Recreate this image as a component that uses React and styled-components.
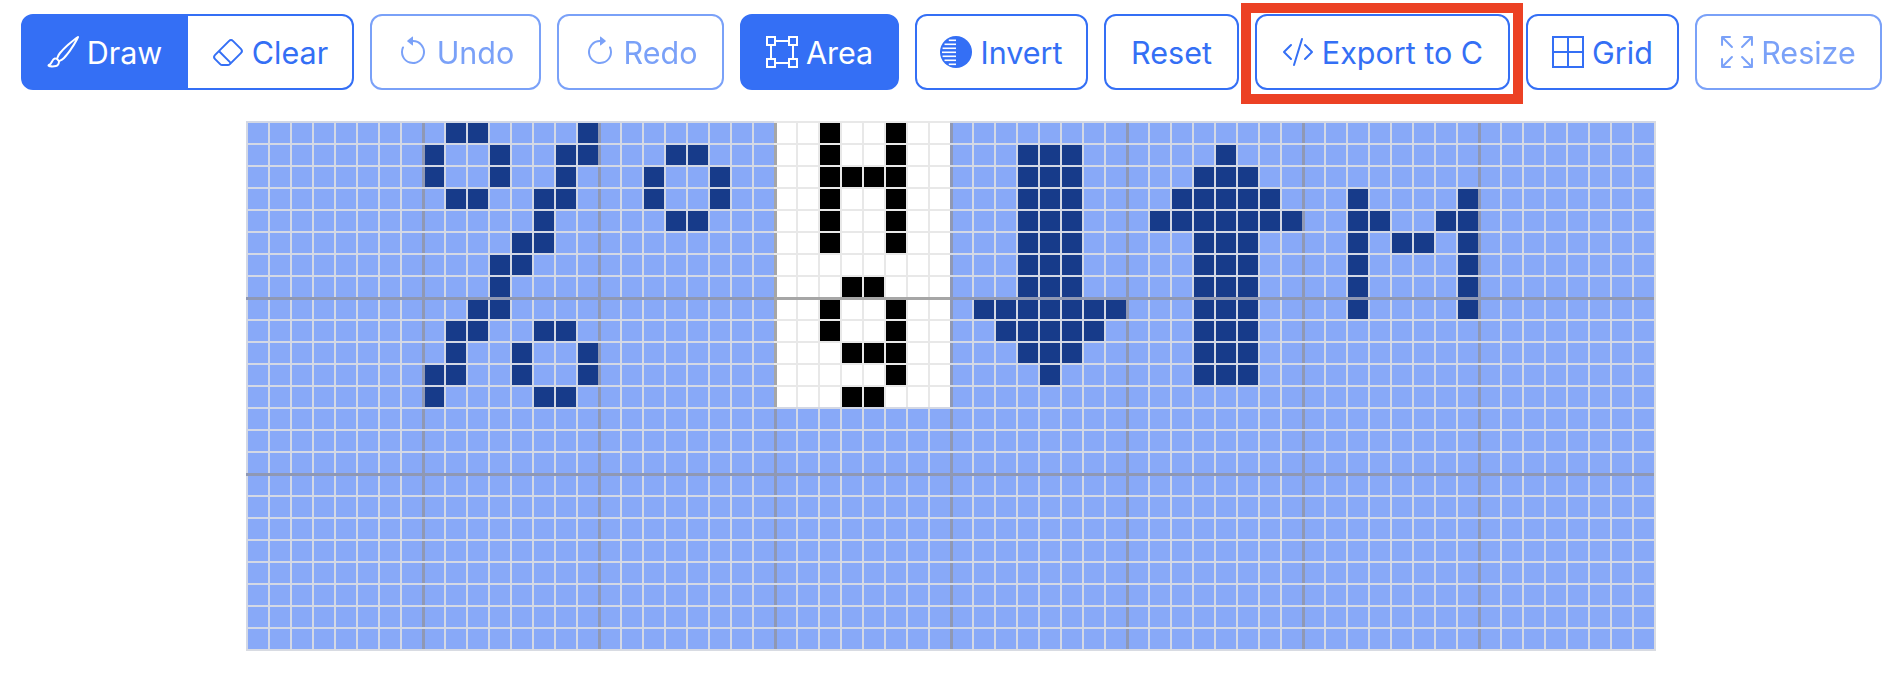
import React from 'react'
import styled, { createGlobalStyle } from 'styled-components'
import {
  BsBrush,
  BsEraser,
  BsArrowCounterclockwise,
  BsArrowClockwise,
  BsBoundingBox,
  BsCodeSlash,
  BsBorderAll,
  BsArrowsFullscreen,
} from 'react-icons/bs'

const GlobalStyle = createGlobalStyle`
  html, body { margin: 0; background: #ffffff; }
  body { font-family: Inter, "Liberation Sans", sans-serif; overflow-x: hidden; }
`

const Page = styled.div`
  display: flex;
  flex-direction: column;
  padding-top: 14px;
`

const Toolbar = styled.div`
  display: flex;
  gap: 16px;
  padding-left: 21px;
  margin-bottom: 31px;
`

const ButtonGroup = styled.div`
  display: flex;
`

const Button = styled.button`
  display: flex;
  align-items: center;
  justify-content: center;
  gap: 8px;
  flex: none;
  box-sizing: border-box;
  height: 76px;
  width: ${p => p.$width}px;
  padding: 0;
  font-family: inherit;
  font-size: 30.5px;
  white-space: nowrap;
  border: 2px solid #346ff5;
  border-radius: 12px;
  color: ${p => (p.$active ? '#ffffff' : '#346ff5')};
  background: ${p => (p.$active ? '#346ff5' : '#ffffff')};
  opacity: ${p => (p.disabled ? 0.65 : 1)};

  svg { width: 32px; height: 32px; flex: none; }
`

const GroupStart = styled(Button)`
  border-radius: 12px 0 0 12px;
`

const GroupEnd = styled(Button)`
  border-radius: 0 12px 12px 0;
  border-left: 0;
`

const Highlighted = styled.div`
  position: relative;
`

const HighlightBox = styled.div`
  position: absolute;
  top: -11px;
  left: -14px;
  right: -13px;
  bottom: -14px;
  border: 10px solid #ec4124;
  pointer-events: none;
`

const PixelGrid = styled.div`
  display: grid;
  grid-template-columns: repeat(64, 22px);
  grid-auto-rows: 22px;
  align-self: center;
  margin-right: 2px;
  border-right: 2px solid #d8dbe2;
  border-bottom: 2px solid #d8dbe2;
  filter: blur(0.45px);
`

const lineColor = p => (p.$screen ? '#e8e8e8' : '#d3d8e5')
const majorColor = p => (p.$screen ? '#a6a6a6' : '#8f98b4')
const cellColor = p => {
  if (p.$on) return p.$screen ? '#000000' : '#173b8a'
  return p.$screen ? '#ffffff' : '#88a9f8'
}

const Cell = styled.div`
  background: ${cellColor};
  box-shadow:
    inset 0 ${p => (p.$rowMajor ? `3px 0 ${majorColor(p)}` : `2px 0 ${lineColor(p)}`)},
    inset ${p => (p.$colMajor ? `3px 0 0 ${majorColor(p)}` : `2px 0 0 ${lineColor(p)}`)};
`

// rows of lit cells: [row, columns]
const litCells = [
  [0, [9, 10, 15, 26, 29]],
  [1, [8, 11, 14, 15, 19, 20, 26, 29, 35, 36, 37, 44]],
  [2, [8, 11, 14, 18, 21, 26, 27, 28, 29, 35, 36, 37, 43, 44, 45]],
  [3, [9, 10, 13, 14, 18, 21, 26, 29, 35, 36, 37, 42, 43, 44, 45, 46, 50, 55]],
  [4, [13, 19, 20, 26, 29, 35, 36, 37, 41, 42, 43, 44, 45, 46, 47, 50, 51, 54, 55]],
  [5, [12, 13, 26, 29, 35, 36, 37, 43, 44, 45, 50, 52, 53, 55]],
  [6, [11, 12, 35, 36, 37, 43, 44, 45, 50, 55]],
  [7, [11, 27, 28, 35, 36, 37, 43, 44, 45, 50, 55]],
  [8, [10, 11, 26, 29, 33, 34, 35, 36, 37, 38, 39, 43, 44, 45, 50, 55]],
  [9, [9, 10, 13, 14, 26, 29, 34, 35, 36, 37, 38, 43, 44, 45]],
  [10, [9, 12, 15, 27, 28, 29, 35, 36, 37, 43, 44, 45]],
  [11, [8, 9, 12, 15, 29, 36, 43, 44, 45]],
  [12, [8, 13, 14, 27, 28]],
]

const lit = new Set()
litCells.forEach(([row, cols]) => cols.forEach(col => lit.add(row * 64 + col)))

const cells = []
for (let row = 0; row < 24; row++) {
  for (let col = 0; col < 64; col++) {
    cells.push({
      id: row * 64 + col,
      on: lit.has(row * 64 + col),
      // the white block is the part of the display that is selected
      screen: col >= 24 && col < 32 && row < 13,
      rowMajor: row > 0 && row % 8 === 0,
      colMajor: col > 0 && col % 8 === 0,
    })
  }
}

// solid circle, its left half cut by white horizontal stripes
const InvertIcon = () => (
  <svg viewBox="0 0 32 32">
    <circle cx="16" cy="16" r="16" fill="currentColor" />
    {[3.5, 7.5, 11.5, 15.5, 19.5, 23.5, 27.5].map(y => {
      const half = Math.sqrt(196 - (y + 0.5 - 16) ** 2)
      return <rect key={y} x={16 - half} y={y} width={half} height="1.6" fill="#ffffff" />
    })}
  </svg>
)

export default function App() {
  return (
    <Page>
      <GlobalStyle />
      <Toolbar>
        <ButtonGroup>
          <GroupStart $active $width={167}><BsBrush />Draw</GroupStart>
          <GroupEnd $width={166}><BsEraser />Clear</GroupEnd>
        </ButtonGroup>
        <Button disabled $width={171}><BsArrowCounterclockwise />Undo</Button>
        <Button disabled $width={167}><BsArrowClockwise />Redo</Button>
        <Button $active $width={159}><BsBoundingBox />Area</Button>
        <Button $width={173}><InvertIcon />Invert</Button>
        <Button $width={135}>Reset</Button>
        <Highlighted>
          <Button $width={255}><BsCodeSlash />Export to C</Button>
          <HighlightBox />
        </Highlighted>
        <Button $width={153}><BsBorderAll />Grid</Button>
        <Button disabled $width={187}><BsArrowsFullscreen />Resize</Button>
      </Toolbar>
      <PixelGrid>
        {cells.map(c => (
          <Cell key={c.id} $on={c.on} $screen={c.screen} $rowMajor={c.rowMajor} $colMajor={c.colMajor} />
        ))}
      </PixelGrid>
    </Page>
  )
}
